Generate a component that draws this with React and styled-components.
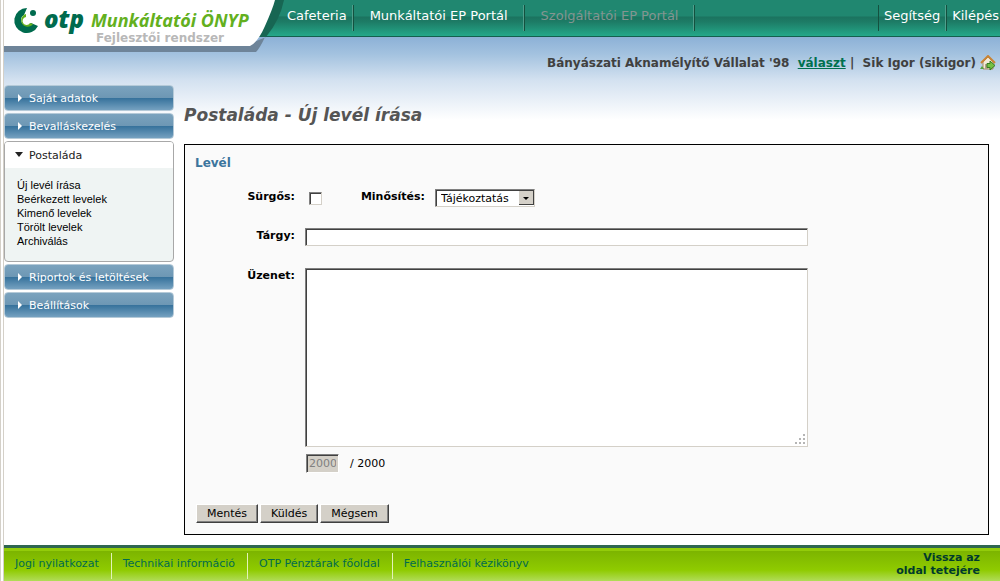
import { useState } from 'react';
import styled, { createGlobalStyle } from 'styled-components';

const GlobalStyle = createGlobalStyle`
  * {
    box-sizing: border-box;
  }

  body {
    margin: 0;
    background: #fff;
    font-family: Verdana, "DejaVu Sans", sans-serif;
    font-size: 11px;
    color: #000;
  }
`;

const Page = styled.div`
  min-height: 100vh;
  display: flex;
  flex-direction: column;
  border-left: 4px double #d4d0c8;
  background: linear-gradient(#8bb0d6 36px, #a3c2df 54px, #d3e1f0 80px, #fff 120px);
  background-clip: padding-box;
`;

const Header = styled.header`
  display: flex;
  height: 52px;
`;

const Brand = styled.div`
  position: relative;
  flex: none;
  width: 283px;
  height: 52px;

  > svg {
    display: block;
  }
`;

const BrandName = styled.div`
  position: absolute;
  top: 9px;
  left: 87px;
  font: italic bold 18px/22px "Open Sans", sans-serif;
  color: #63b01e;
  white-space: nowrap;
`;

const BrandNote = styled.div`
  position: absolute;
  top: 31px;
  left: 92px;
  font-size: 12px;
  line-height: 14px;
  font-weight: bold;
  color: #b8b8b8;
  white-space: nowrap;
`;

const TopNav = styled.nav`
  flex: 1;
  display: flex;
  height: 37px;
  padding-top: 5px;
  border-bottom: 1px solid #14604e;
  background: linear-gradient(#208770, #208770 16px, #1b735f 17px, #1d7c66 22px, #24a88a 36px);
`;

const TopLink = styled.a`
  height: 26px;
  padding: 0 16px;
  border-right: 1px solid #14513f;
  box-shadow: inset -1px 0 #4f9f8c;
  font-size: 13px;
  line-height: 22px;
  color: ${props => props.$muted ? '#839591' : '#fff'};
  text-decoration: none;
  white-space: nowrap;

  &:first-child {
    padding: 0 6px 0 0;
  }
`;

const TopRight = styled.div`
  display: flex;
  margin-left: auto;
  border-left: 1px solid #14513f;
  height: 26px;

  ${TopLink} {
    padding: 0 6px 0 5px;
  }

  ${TopLink}:last-child {
    padding-right: 1px;
    border: 0;
    box-shadow: none;
  }
`;

const UserBar = styled.div`
  display: flex;
  justify-content: flex-end;
  align-items: center;
  height: 21px;
  padding-right: 4px;
  font-size: 12px;
  font-weight: bold;
  color: #404040;
  white-space: pre;

  a {
    color: #00704f;
  }

  svg {
    display: block;
    margin-left: 4px;
  }
`;

const Body = styled.div`
  flex: 1;
  display: flex;
  gap: 10px;
  padding: 12px 11px 10px 0;
`;

const Sidebar = styled.nav`
  flex: none;
  width: 170px;
  display: flex;
  flex-direction: column;
  gap: 2px;
`;

const MenuButton = styled.button`
  flex: none;
  display: flex;
  align-items: center;
  gap: 6px;
  height: 26px;
  width: 100%;
  padding: 0 10px;
  border: 1px solid #b5cad8;
  border-radius: 4px;
  background: linear-gradient(#7ba3be, #6d97b4 50%, #35719b 50%, #75a1c0);
  font: 11px "DejaVu Sans", sans-serif;
  color: #fff;
  text-align: left;
  white-space: nowrap;
`;

const OpenMenu = styled.div`
  border: 1px solid #a8a8a8;
  border-radius: 4px;
  background: #eff4f3;
  overflow: hidden;

  ${MenuButton} {
    border: 0;
    border-radius: 0;
    background: #fff;
    color: #222;
  }
`;

const SubMenu = styled.ul`
  list-style: none;
  margin: 0;
  padding: 10px 12px 13px;
  font: 11px/14px "Liberation Sans", Arial, sans-serif;

  a {
    color: #000;
    text-decoration: none;
  }
`;

const Content = styled.main`
  flex: 1;
  display: flex;
  flex-direction: column;
  min-width: 0;
`;

const Title = styled.h1`
  margin: 20px 0 19px;
  font-size: 17px;
  line-height: 20px;
  font-style: italic;
  font-weight: bold;
  color: #555;
`;

const LetterForm = styled.form`
  flex: 1;
  padding: 8px 10px 11px;
  border: 1px solid #000;
  background: #fafafa;
`;

const Legend = styled.h2`
  margin: 0;
  font-size: 12px;
  line-height: 20px;
  color: #3c759d;
`;

const Row = styled.div`
  display: flex;
  align-items: flex-start;
  gap: 10px;
  margin-top: ${props => props.$top}px;
`;

const Label = styled.label`
  flex: none;
  width: ${props => props.$wide || 100}px;
  font-size: 11px;
  line-height: 16px;
  font-weight: bold;
  text-align: right;
`;

const sunken = `
  border: 1px solid;
  border-color: #808080 #d4d0c8 #d4d0c8 #808080;
  border-radius: 0;
  box-shadow: inset 1px 1px #404040;
  background: #fff;
`;

const CheckBox = styled.input`
  appearance: none;
  width: 13px;
  height: 13px;
  margin: 3px 0 0 4px;
  ${sunken}

  &:checked {
    background: #404040;
  }
`;

const SelectBox = styled.div`
  position: relative;
  width: 100px;
  height: 18px;

  svg {
    position: absolute;
    top: 2px;
    right: 1px;
    pointer-events: none;
  }
`;

const Select = styled.select`
  appearance: none;
  width: 100%;
  height: 18px;
  padding: 0 5px;
  ${sunken}
  font: 11px "DejaVu Sans", sans-serif;
  color: #000;
`;

const TextInput = styled.input`
  width: 503px;
  min-width: 0;
  height: 18px;
  padding: 0 4px;
  ${sunken}
  font: 11px "DejaVu Sans", sans-serif;
`;

const AreaWrap = styled.div`
  position: relative;

  svg {
    position: absolute;
    right: 2px;
    bottom: 2px;
    pointer-events: none;
  }
`;

const TextArea = styled.textarea`
  display: block;
  width: 503px;
  height: 179px;
  padding: 4px;
  resize: none;
  ${sunken}
  font: 11px "DejaVu Sans", sans-serif;
`;

const Counter = styled.div`
  display: flex;
  gap: 11px;
  align-items: center;
  margin: 7px 0 0 111px;
`;

const CountInput = styled.input`
  width: 33px;
  height: 19px;
  padding: 0 2px;
  ${sunken}
  border-color: #808080 #fff #fff #808080;
  background: #d4d0c8;
  font: 11px "DejaVu Sans", sans-serif;
  color: #808080;
`;

const Buttons = styled.div`
  display: flex;
  gap: 2px;
  margin: 31px 0 0 1px;
`;

const Button = styled.button`
  height: 19px;
  padding: 0 10px;
  border: 1px solid;
  border-color: #fff #404040 #404040 #fff;
  box-shadow: inset -1px -1px #808080;
  background: #d4d0c8;
  font: 11px "DejaVu Sans", sans-serif;
  color: #000;
`;

const Footer = styled.footer`
  display: flex;
  height: 36px;
  padding-top: 5px;
  border-top: 3px solid #2f6650;
  background: linear-gradient(#93cc0a 3px, #7cb400 3px, #8fcb00 22px, #b1dc59 33px);
`;

const FooterLinks = styled.nav`
  display: flex;
`;

const FooterLink = styled.a`
  height: 26px;
  padding: 0 12px 0 11px;
  border-right: 1px solid #e3f3b8;
  font-size: 11px;
  line-height: 21px;
  color: #006b4e;
  text-decoration: none;
  white-space: nowrap;

  &:last-child {
    border: 0;
  }
`;

const BackToTop = styled.a`
  width: 90px;
  margin-left: auto;
  margin-right: 20px;
  margin-top: -2px;
  font-size: 11px;
  line-height: 13px;
  font-weight: bold;
  text-align: right;
  color: #003a2c;
  text-decoration: none;
`;

function Logo() {
  return (
    <svg width="283" height="52" viewBox="0 0 283 52">
      <defs>
        <linearGradient id="bar" gradientUnits="userSpaceOnUse" x1="0" y1="0" x2="0" y2="36">
          <stop offset="0.44" stopColor="#208770" />
          <stop offset="0.47" stopColor="#1b735f" />
          <stop offset="0.61" stopColor="#1d7c66" />
          <stop offset="1" stopColor="#24a88a" />
        </linearGradient>
      </defs>
      <path d="M262 0H283V36H250Z" fill="url(#bar)" />
      <path d="M250 36H283V37H250Z" fill="#14604e" />
      <path d="M0 46H240L262 37H261Q256 48 252 52H0Z" fill="#6e8499" />
      <path d="M268 0H280Q276 20 262 37H250Z" fill="#176653" />
      <path d="M0 0H271Q269 8 261 26Q254 42 246 46H0Z" fill="#fff" />
      <path d="M23 8A12.500 12.500 0 1 0 34 26L27 23A5.500 5.500 0 1 1 20 15Z" fill="#006b4e" />
      <path d="M22 14A6.500 6.500 0 1 0 29 24L26 23A4 4 0 1 1 22 17Z" fill="#63b01e" />
      <circle cx="29" cy="13" r="3" fill="#006b4e" />
      <text x="40" y="28" fontFamily="Open Sans" fontSize="24" fontWeight="800" fontStyle="italic" fill="#006b4e">otp</text>
    </svg>
  );
}

function HomeIcon() {
  return (
    <svg width="16" height="16" viewBox="0 0 16 16">
      <path d="M3 7L8 2L13 7V14H3Z" fill="#f3ead9" stroke="#a58b67" />
      <path d="M1 8L8 1L15 8" fill="none" stroke="#c98435" strokeWidth="2" />
      <path d="M5 9H8V14H5Z" fill="#b5a287" />
      <path d="M0 14L2 11L4 14Z" fill="#53a33e" />
      <path d="M7 8.500H10V6L15 10.500L10 15V12.500H7Z" fill="#75c043" stroke="#377d22" />
    </svg>
  );
}

function Arrow({ open }) {
  return (
    <svg width="8" height="8" viewBox="0 0 8 8">
      <path d={open ? 'M0 1H8L4 6Z' : 'M3 0L7 4L3 8Z'} fill="currentColor" />
    </svg>
  );
}

const subItems = ['Új levél írása', 'Beérkezett levelek', 'Kimenő levelek', 'Törölt levelek', 'Archiválás'];
const footerItems = ['Jogi nyilatkozat', 'Technikai információ', 'OTP Pénztárak főoldal', 'Felhasználói kézikönyv'];

function App() {
  const [message, setMessage] = useState('');

  return (
    <>
      <GlobalStyle />
      <Page id="top">
        <Header>
          <Brand>
            <Logo />
            <BrandName>Munkáltatói ÖNYP</BrandName>
            <BrandNote>Fejlesztői rendszer</BrandNote>
          </Brand>
          <TopNav>
            <TopLink href="#">Cafeteria</TopLink>
            <TopLink href="#">Munkáltatói EP Portál</TopLink>
            <TopLink href="#" $muted>Szolgáltatói EP Portál</TopLink>
            <TopRight>
              <TopLink href="#">Segítség</TopLink>
              <TopLink href="#">Kilépés</TopLink>
            </TopRight>
          </TopNav>
        </Header>
        <UserBar>
          <span>{"Bányászati Aknamélyítő Vállalat '98  "}</span>
          <a href="#">választ</a>
          <span>{' |  Sik Igor (sikigor)'}</span>
          <HomeIcon />
        </UserBar>
        <Body>
          <Sidebar>
            <MenuButton><Arrow />Saját adatok</MenuButton>
            <MenuButton><Arrow />Bevalláskezelés</MenuButton>
            <OpenMenu>
              <MenuButton><Arrow open />Postaláda</MenuButton>
              <SubMenu>
                {subItems.map(item => <li key={item}><a href="#">{item}</a></li>)}
              </SubMenu>
            </OpenMenu>
            <MenuButton><Arrow />Riportok és letöltések</MenuButton>
            <MenuButton><Arrow />Beállítások</MenuButton>
          </Sidebar>
          <Content>
            <Title>Postaláda - Új levél írása</Title>
            <LetterForm onSubmit={e => e.preventDefault()}>
              <Legend>Levél</Legend>
              <Row $top={16}>
                <Label htmlFor="urgent">Sürgős:</Label>
                <CheckBox type="checkbox" id="urgent" />
                <Label htmlFor="kind" $wide={93}>Minősítés:</Label>
                <SelectBox>
                  <Select id="kind">
                    <option>Tájékoztatás</option>
                  </Select>
                  <svg width="15" height="14" viewBox="0 0 15 14">
                    <path d="M0 0H15V14H0Z" fill="#404040" />
                    <path d="M0 0H14V13H0Z" fill="#d4d0c8" />
                    <path d="M4 6H10L7 9Z" fill="#000" />
                  </svg>
                </SelectBox>
              </Row>
              <Row $top={21}>
                <Label htmlFor="subject">Tárgy:</Label>
                <TextInput id="subject" />
              </Row>
              <Row $top={22}>
                <Label htmlFor="message">Üzenet:</Label>
                <AreaWrap>
                  <TextArea id="message" maxLength={2000} value={message} onChange={e => setMessage(e.target.value)} />
                  <svg width="11" height="11" viewBox="0 0 11 11">
                    <path d="M8 0H10V2H8ZM4 4H6V6H4ZM8 4H10V6H8ZM0 8H2V10H0ZM4 8H6V10H4ZM8 8H10V10H8Z" fill="#b5b5b5" />
                  </svg>
                </AreaWrap>
              </Row>
              <Counter>
                <CountInput aria-label="Üzenet" value={2000 - message.length} disabled readOnly />
                <span>/ 2000</span>
              </Counter>
              <Buttons>
                <Button type="submit">Mentés</Button>
                <Button type="button">Küldés</Button>
                <Button type="button">Mégsem</Button>
              </Buttons>
            </LetterForm>
          </Content>
        </Body>
        <Footer>
          <FooterLinks>
            {footerItems.map(item => <FooterLink key={item} href="#">{item}</FooterLink>)}
          </FooterLinks>
          <BackToTop href="#top">Vissza az oldal tetejére</BackToTop>
        </Footer>
      </Page>
    </>
  );
}

export default App;
